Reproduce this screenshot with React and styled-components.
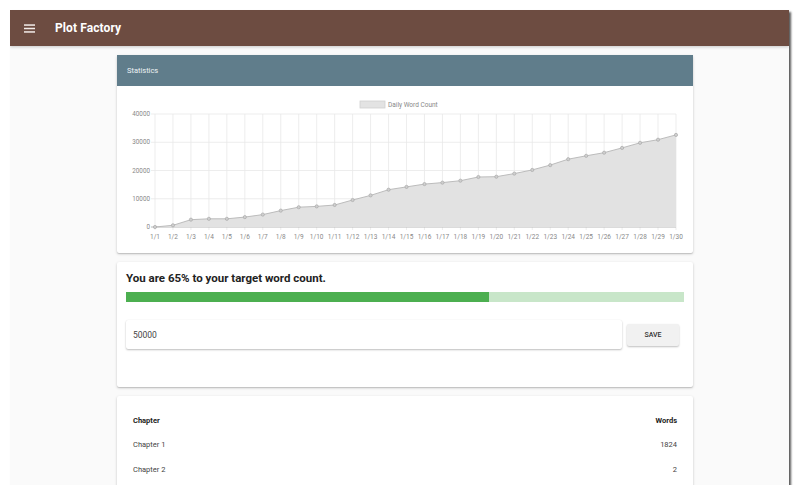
import React from 'react'
import styled, { createGlobalStyle } from 'styled-components'

const GlobalStyle = createGlobalStyle`
  html, body {
    margin: 0;
    padding: 0;
    background: #ffffff;
    font-family: Roboto, "Liberation Sans", Arial, sans-serif;
  }
`

const counts = [
  0, 600, 2600, 2900, 2900, 3500, 4400, 5800, 7000, 7300,
  7800, 9550, 11200, 13200, 14200, 15200, 15700, 16400, 17700, 17800,
  18900, 20200, 21900, 24000, 25200, 26300, 28000, 29800, 30900, 32600
]

const chapters = [
  { name: 'Chapter 1', words: 1824 },
  { name: 'Chapter 2', words: 2 }
]

const PLOT = { left: 38, right: 559, top: 28, bottom: 141 }

function WordChart() {
  const step = (PLOT.right - PLOT.left) / (counts.length - 1)
  const px = (i) => PLOT.left + i * step
  const py = (v) => PLOT.bottom - (v / 40000) * (PLOT.bottom - PLOT.top)
  const line = counts.map((v, i) => `${i ? 'L' : 'M'}${px(i).toFixed(1)},${py(v).toFixed(1)}`).join(' ')
  const area = `${line} L${PLOT.right},${PLOT.bottom} L${PLOT.left},${PLOT.bottom} Z`
  const ticks = [0, 10000, 20000, 30000, 40000]

  return (
    <svg width="576" height="167" viewBox="0 0 576 167">
      <rect x="243" y="15" width="25" height="7" fill="#e3e3e3" stroke="#d0d0d0" strokeWidth="0.8" />
      <text x="271" y="21" fontSize="6.5" fill="#888" fontFamily="Roboto, Arial, sans-serif">Daily Word Count</text>
      {counts.map((_, i) => (
        <line key={'v' + i} x1={px(i)} x2={px(i)} y1={PLOT.top} y2={PLOT.bottom + 3} stroke="#e8e8e8" strokeWidth="0.8" />
      ))}
      {ticks.map((t) => (
        <g key={t}>
          <line x1={PLOT.left - 4} x2={PLOT.right} y1={py(t)} y2={py(t)} stroke={t === 0 ? '#b8b8b8' : '#e8e8e8'} strokeWidth={t === 0 ? 1 : 0.8} />
          <text x={PLOT.left - 5} y={py(t) + 2.2} fontSize="6.3" fill="#888" textAnchor="end" fontFamily="Roboto, Arial, sans-serif">{t}</text>
        </g>
      ))}
      <path d={area} fill="#e2e2e2" />
      <path d={line} fill="none" stroke="#bcbcbc" strokeWidth="1" />
      {counts.map((v, i) => (
        <circle key={'p' + i} cx={px(i)} cy={py(v)} r="1.6" fill="#cfcfcf" stroke="#a9a9a9" strokeWidth="0.7" />
      ))}
      {counts.map((_, i) => (
        <text key={'x' + i} x={px(i)} y="153" fontSize="6.5" fill="#888" textAnchor="middle" fontFamily="Roboto, Arial, sans-serif">{`1/${i + 1}`}</text>
      ))}
    </svg>
  )
}

function App() {
  const percent = 65
  return (
    <>
      <GlobalStyle />
      <Frame>
        <AppBar>
          <MenuIcon width="11" height="9" viewBox="0 0 11 9">
            <rect x="0" y="0.3" width="11" height="1.5" fill="#f3ece9" />
            <rect x="0" y="3.75" width="11" height="1.5" fill="#f3ece9" />
            <rect x="0" y="7.2" width="11" height="1.5" fill="#f3ece9" />
          </MenuIcon>
          <Title>Plot Factory</Title>
        </AppBar>
        <Main>
          <Card>
            <CardHeader>Statistics</CardHeader>
            <ChartBody>
              <WordChart />
            </ChartBody>
          </Card>
          <Card>
            <TargetBody>
              <Heading>You are {percent}% to your target word count.</Heading>
              <Progress>
                <ProgressFill style={{ width: `${percent}%` }} />
              </Progress>
              <FormRow>
                <TargetInput defaultValue="50000" />
                <SaveButton>SAVE</SaveButton>
              </FormRow>
            </TargetBody>
          </Card>
          <Card>
            <Table>
              <thead>
                <tr>
                  <Th>Chapter</Th>
                  <Th $right>Words</Th>
                </tr>
              </thead>
              <tbody>
                {chapters.map((c) => (
                  <tr key={c.name}>
                    <Td>{c.name}</Td>
                    <Td $right>{c.words}</Td>
                  </tr>
                ))}
              </tbody>
            </Table>
          </Card>
        </Main>
      </Frame>
    </>
  )
}

const Frame = styled.div`
  margin: 10px 0 0 10px;
  width: 779px;
  height: 475px;
  overflow: hidden;
  background: #fafafa;
  box-shadow: 2px 2px 2px rgba(0, 0, 0, 0.65);
  display: flex;
  flex-direction: column;
`

const AppBar = styled.div`
  height: 36px;
  flex-shrink: 0;
  background: #6d4c41;
  display: flex;
  align-items: center;
  padding-left: 14px;
  box-shadow: 0 1px 3px rgba(0, 0, 0, 0.2);
`

const MenuIcon = styled.svg`
  display: block;
  margin-right: 20px;
`

const Title = styled.div`
  color: #ffffff;
  font-size: 12px;
  font-weight: 700;
  letter-spacing: 0.1px;
`

const Main = styled.div`
  flex: 1;
  display: flex;
  flex-direction: column;
  gap: 9px;
  padding: 9px 96px 0 107px;
`

const Card = styled.div`
  background: #ffffff;
  border-radius: 2px;
  box-shadow: 0 1px 3px rgba(0, 0, 0, 0.18), 0 1px 1px rgba(0, 0, 0, 0.12);
  flex-shrink: 0;
`

const CardHeader = styled.div`
  height: 31px;
  background: #607d8b;
  color: #eef3f5;
  font-size: 7.5px;
  display: flex;
  align-items: center;
  padding-left: 10px;
`

const ChartBody = styled.div`
  height: 167px;
  svg {
    display: block;
  }
`

const TargetBody = styled.div`
  height: 125px;
  box-sizing: border-box;
  padding: 9px 9px 0 9px;
`

const Heading = styled.div`
  font-size: 11.5px;
  font-weight: 700;
  color: #222;
  height: 20px;
  line-height: 14px;
  margin-bottom: 1px;
`

const Progress = styled.div`
  height: 10px;
  background: #c8e6c9;
  margin-bottom: 18px;
`

const ProgressFill = styled.div`
  height: 100%;
  background: #4caf50;
`

const FormRow = styled.div`
  display: flex;
  align-items: center;
  gap: 5px;
  padding-right: 5px;
`

const TargetInput = styled.input`
  flex: 1;
  height: 29px;
  box-sizing: border-box;
  border: none;
  outline: none;
  padding: 0 7px;
  font-family: Roboto, "Liberation Sans", Arial, sans-serif;
  font-size: 8.5px;
  color: #444;
  background: #ffffff;
  box-shadow: 0 1px 2px rgba(0, 0, 0, 0.25), 0 0 1px rgba(0, 0, 0, 0.08);
  border-radius: 2px;
`

const SaveButton = styled.button`
  width: 52px;
  height: 22px;
  border: none;
  border-radius: 2px;
  background: #f1f1f1;
  color: #333;
  font-family: Roboto, "Liberation Sans", Arial, sans-serif;
  font-size: 7px;
  font-weight: 500;
  box-shadow: 0 1px 2px rgba(0, 0, 0, 0.25);
`

const Table = styled.table`
  width: 100%;
  border-collapse: collapse;
  margin: 12px 0 20px;
`

const Th = styled.th`
  text-align: ${(p) => (p.$right ? 'right' : 'left')};
  font-size: 7.5px;
  font-weight: 700;
  color: #222;
  height: 24px;
  padding: 0 16px;
`

const Td = styled.td`
  text-align: ${(p) => (p.$right ? 'right' : 'left')};
  font-size: 7.5px;
  color: #444;
  height: 25px;
  padding: 0 16px;
`

export default App
